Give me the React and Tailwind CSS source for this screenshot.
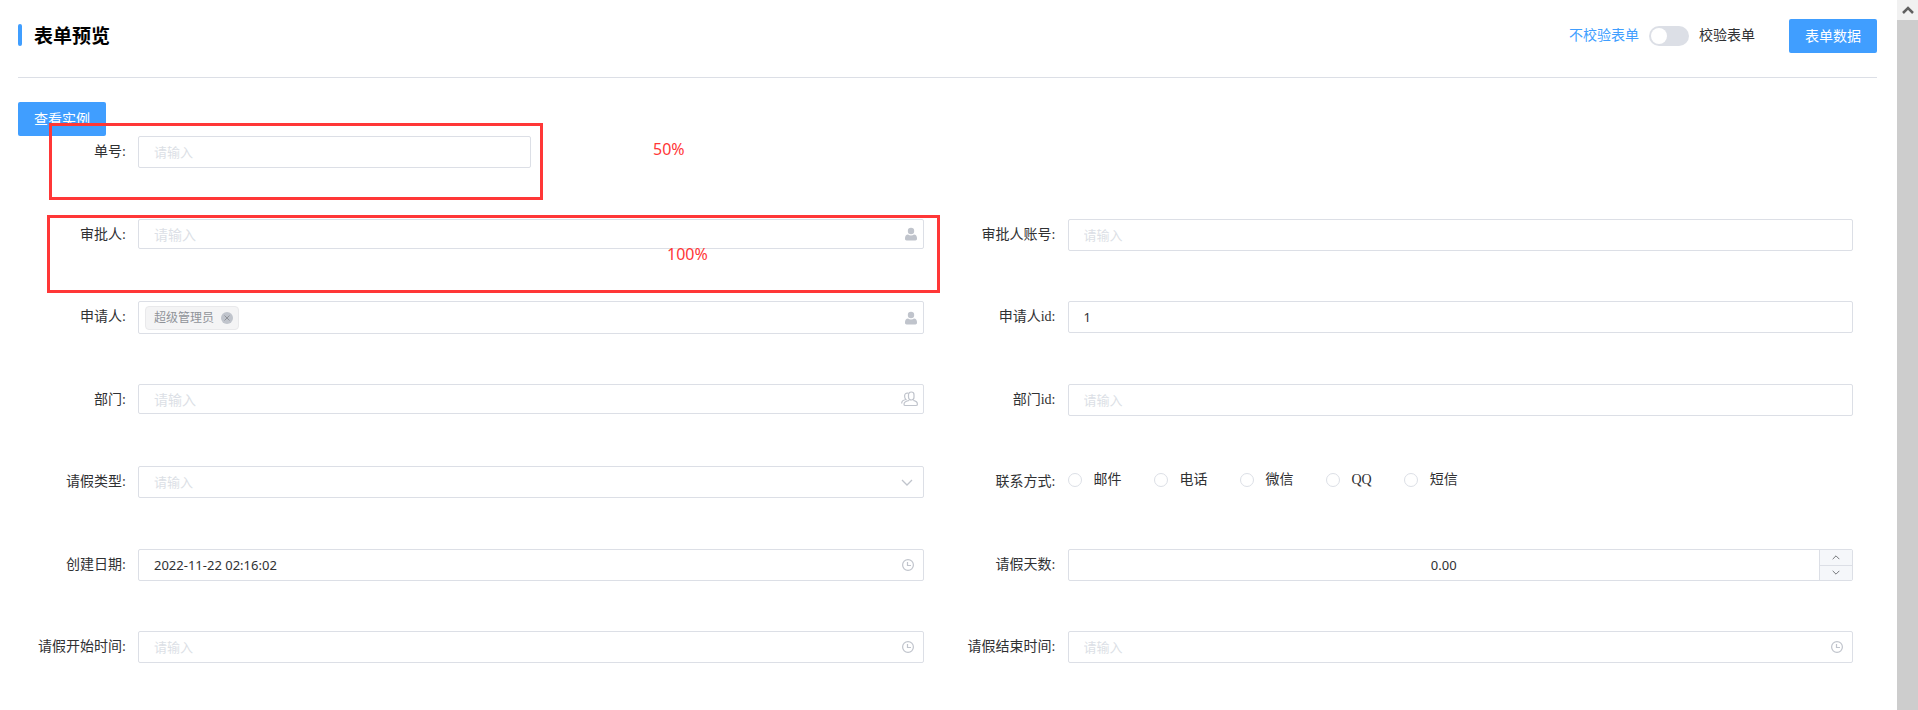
import { useState } from 'react'

const inputBase =
  'w-full border border-[#dcdfe6] rounded-xs bg-white px-[15px] text-[#303133] placeholder:text-[#dcdfe6] outline-none focus:border-[#409eff]'

function UserIcon() {
  return (
    <svg viewBox="0 0 12 14" className="w-3 h-[14px]" fill="#c0c4cc">
      <circle cx="6" cy="4" r="3.2" />
      <path d="M0 11C0 9 1.2 7.700 3 7.500C3.900 8.200 4.900 8.400 6 8.400S8.100 8.200 9 7.500C10.800 7.700 12 9 12 11V11.800C12 12.900 11.400 13.400 10.400 13.400H1.600C.6 13.400 0 12.900 0 11.800Z" />
    </svg>
  )
}

function GroupIcon() {
  return (
    <svg viewBox="0 0 17 16" className="w-[17px] h-4" fill="none" stroke="#c0c4cc" strokeWidth="1.200">
      <rect x="7.500" y="1" width="5.500" height="8" rx="2.700" />
      <path d="M8.200 9.500C5 10 3 10.800 3 13.200C3 14.300 3.400 14.500 4.200 14.500H15C16 14.500 16.400 14.200 16.400 13.200C16.400 10.800 14.500 9.900 12.300 9.400" />
      <path d="M7 2.200C5 1.700 3.600 3 3.600 5C3.600 6.800 4 7.800 4.800 8.500C2.500 9 .7 9.800 .7 12V12.600" />
    </svg>
  )
}

function ClockIcon() {
  return (
    <svg viewBox="0 0 12 12" className="size-3" fill="none" stroke="#c0c4cc" strokeWidth="1.200">
      <circle cx="6" cy="6" r="5.400" />
      <path d="M5.500 3V6.500H9" />
    </svg>
  )
}

function Chevron({ up, className }) {
  return (
    <svg viewBox="0 0 12 7" className={className} fill="none" stroke="currentColor" strokeWidth="1.300">
      <path d={up ? 'M1 6L6 1L11 6' : 'M1 1L6 6L11 1'} />
    </svg>
  )
}

function Field({ id, label, children }) {
  return (
    <div className="flex items-start">
      <label htmlFor={id} className="w-[120px] shrink-0 pr-3 text-right leading-8">
        {label}:
      </label>
      <div className="flex-1 min-w-0">{children}</div>
    </div>
  )
}

function TextField({ id, label, value, large, icon, iconClass = 'right-[10px]' }) {
  return (
    <Field id={id} label={label}>
      <div className="relative">
        <input
          id={id}
          type="text"
          defaultValue={value}
          placeholder="请输入"
          className={`${inputBase} ${large ? 'h-[30px] text-sm' : 'h-8 text-[13px]'}`}
        />
        {icon && (
          <span className={`absolute inset-y-0 flex items-center pointer-events-none ${iconClass}`}>{icon}</span>
        )}
      </div>
    </Field>
  )
}

const contacts = ['邮件', '电话', '微信', 'QQ', '短信']

export default function App() {
  const [validate, setValidate] = useState(false)
  const [contact, setContact] = useState('')
  const [days, setDays] = useState(0)

  return (
    <div className="flex min-h-screen bg-white text-sm text-[#303133] font-['Liberation_Serif','Noto_Sans_CJK_SC',serif]">
      <main className="flex-1 min-w-0 pl-[18px] pr-5">
        {/* Header */}
        <header className="flex items-center justify-between h-[78px] pb-[6px] border-b border-[#dcdfe6]">
          <div className="flex items-center gap-3">
            <span className="w-1 h-[22px] rounded-xs bg-[#409eff]" />
            <h3 className="pt-[2px] text-[19px] font-bold text-black">表单预览</h3>
          </div>
          <div className="flex items-center">
            <span className={validate ? '' : 'text-[#409eff]'}>不校验表单</span>
            <button
              type="button"
              role="switch"
              aria-checked={validate}
              aria-label="校验表单"
              onClick={() => setValidate(!validate)}
              className={`mx-[10px] flex w-10 h-5 p-[2px] rounded-full ${
                validate ? 'justify-end bg-[#409eff]' : 'bg-[#dcdfe6]'
              }`}
            >
              <span className="size-4 rounded-full bg-white" />
            </button>
            <span className={validate ? 'text-[#409eff]' : ''}>校验表单</span>
            <button type="button" className="ml-[34px] h-[34px] px-4 pt-[2px] rounded-xs bg-[#409eff] text-white">
              表单数据
            </button>
          </div>
        </header>

        <button type="button" className="block mt-6 h-[34px] px-4 pt-[2px] rounded-xs bg-[#409eff] text-white">
          查看实例
        </button>

        {/* Form */}
        <form className="relative pr-6 [&_input]:font-['Noto_Sans','Noto_Sans_CJK_SC',sans-serif]">
          <div className="grid grid-cols-2 gap-x-6 auto-rows-[33px_32px] gap-y-[50px]">
            <div className="col-span-2 w-[513px]">
              <TextField id="no" label="单号" />
            </div>

            <TextField id="approver" label="审批人" large icon={<UserIcon />} iconClass="right-[7px]" />
            <TextField id="approverAccount" label="审批人账号" />

            <Field id="applicant" label="申请人">
              <div className="flex items-center h-[33px] pl-[6px] pr-[6px] border border-[#dcdfe6] rounded-xs">
                <span className="flex items-center gap-[7px] h-6 pl-2 pr-[5px] border border-[#e9e9eb] rounded-sm bg-[#f4f4f5] text-xs text-[#909399]">
                  超级管理员
                  <button type="button" aria-label="移除" className="size-3 rounded-full bg-[#c0c4cc]">
                    <svg viewBox="0 0 12 12" className="size-3" stroke="#909399">
                      <path d="M3.500 3.500L8.500 8.500M8.500 3.500L3.500 8.500" />
                    </svg>
                  </button>
                </span>
                <input id="applicant" type="text" className="flex-1 min-w-0 px-2 outline-none" />
                <UserIcon />
              </div>
            </Field>
            <TextField id="applicantId" label="申请人id" value="1" />

            <TextField id="dept" label="部门" large icon={<GroupIcon />} iconClass="right-[6px]" />
            <TextField id="deptId" label="部门id" />

            <Field id="leaveType" label="请假类型">
              <div className="relative">
                <select
                  id="leaveType"
                  defaultValue=""
                  className="w-full h-8 px-[15px] appearance-none border border-[#dcdfe6] rounded-xs bg-white text-[13px] text-[#dcdfe6] outline-none font-['Noto_Sans','Noto_Sans_CJK_SC',sans-serif]"
                >
                  <option value="">请输入</option>
                </select>
                <span className="absolute inset-y-0 right-[11px] flex items-center pointer-events-none text-[#c0c4cc]">
                  <Chevron className="w-3 h-[7px]" />
                </span>
              </div>
            </Field>
            <Field label="联系方式">
              <div role="radiogroup" aria-label="联系方式" className="flex gap-8 h-7 items-center">
                {contacts.map((name) => (
                  <label key={name} className="flex items-center gap-3">
                    <input
                      type="radio"
                      name="contact"
                      checked={contact === name}
                      onChange={() => setContact(name)}
                      className="size-[14px] appearance-none rounded-full border border-[#dcdfe6] bg-white checked:border-4 checked:border-[#409eff]"
                    />
                    {name}
                  </label>
                ))}
              </div>
            </Field>

            <TextField id="createdAt" label="创建日期" value="2022-11-22 02:16:02" icon={<ClockIcon />} />
            <Field id="days" label="请假天数">
              <div className="flex h-8 border border-[#dcdfe6] rounded-xs">
                <input
                  id="days"
                  type="text"
                  value={days.toFixed(2)}
                  readOnly
                  className="flex-1 min-w-0 px-[15px] text-center text-[13px] outline-none"
                />
                <div className="flex flex-col w-[33px] border-l border-[#dcdfe6] bg-[#f5f7fa] text-[#606266]">
                  <button
                    type="button"
                    aria-label="增加"
                    onClick={() => setDays(days + 1)}
                    className="flex flex-1 items-center justify-center border-b border-[#dcdfe6]"
                  >
                    <Chevron up className="w-2 h-[5px]" />
                  </button>
                  <button
                    type="button"
                    aria-label="减少"
                    onClick={() => setDays(Math.max(0, days - 1))}
                    className="flex flex-1 items-center justify-center"
                  >
                    <Chevron className="w-2 h-[5px]" />
                  </button>
                </div>
              </div>
            </Field>

            <TextField id="startAt" label="请假开始时间" icon={<ClockIcon />} />
            <TextField id="endAt" label="请假结束时间" icon={<ClockIcon />} />
          </div>

          {/* Width notes drawn over the form */}
          <div className="absolute -top-[13px] left-[31px] w-[494px] h-[77px] border-3 border-[#ff3737] pointer-events-none" />
          <div className="absolute top-[79px] left-[29px] w-[893px] h-[78px] border-3 border-[#ff3737] pointer-events-none" />
          <span className="absolute top-[1px] left-[635px] text-base text-[#ff3737] font-['Noto_Sans',sans-serif]">50%</span>
          <span className="absolute top-[106px] left-[649px] text-base text-[#ff3737] font-['Noto_Sans',sans-serif]">100%</span>
        </form>
      </main>

      {/* Scrollbar */}
      <div className="flex flex-col w-[21px] bg-[#cdcdcd]">
        <div className="flex items-center justify-center h-5 bg-[#f1f1f1] text-[#606060]">
          <svg viewBox="0 0 12 8" className="w-3 h-2" fill="none" stroke="currentColor" strokeWidth="2.500">
            <path d="M1 7L6 2L11 7" />
          </svg>
        </div>
      </div>
    </div>
  )
}
